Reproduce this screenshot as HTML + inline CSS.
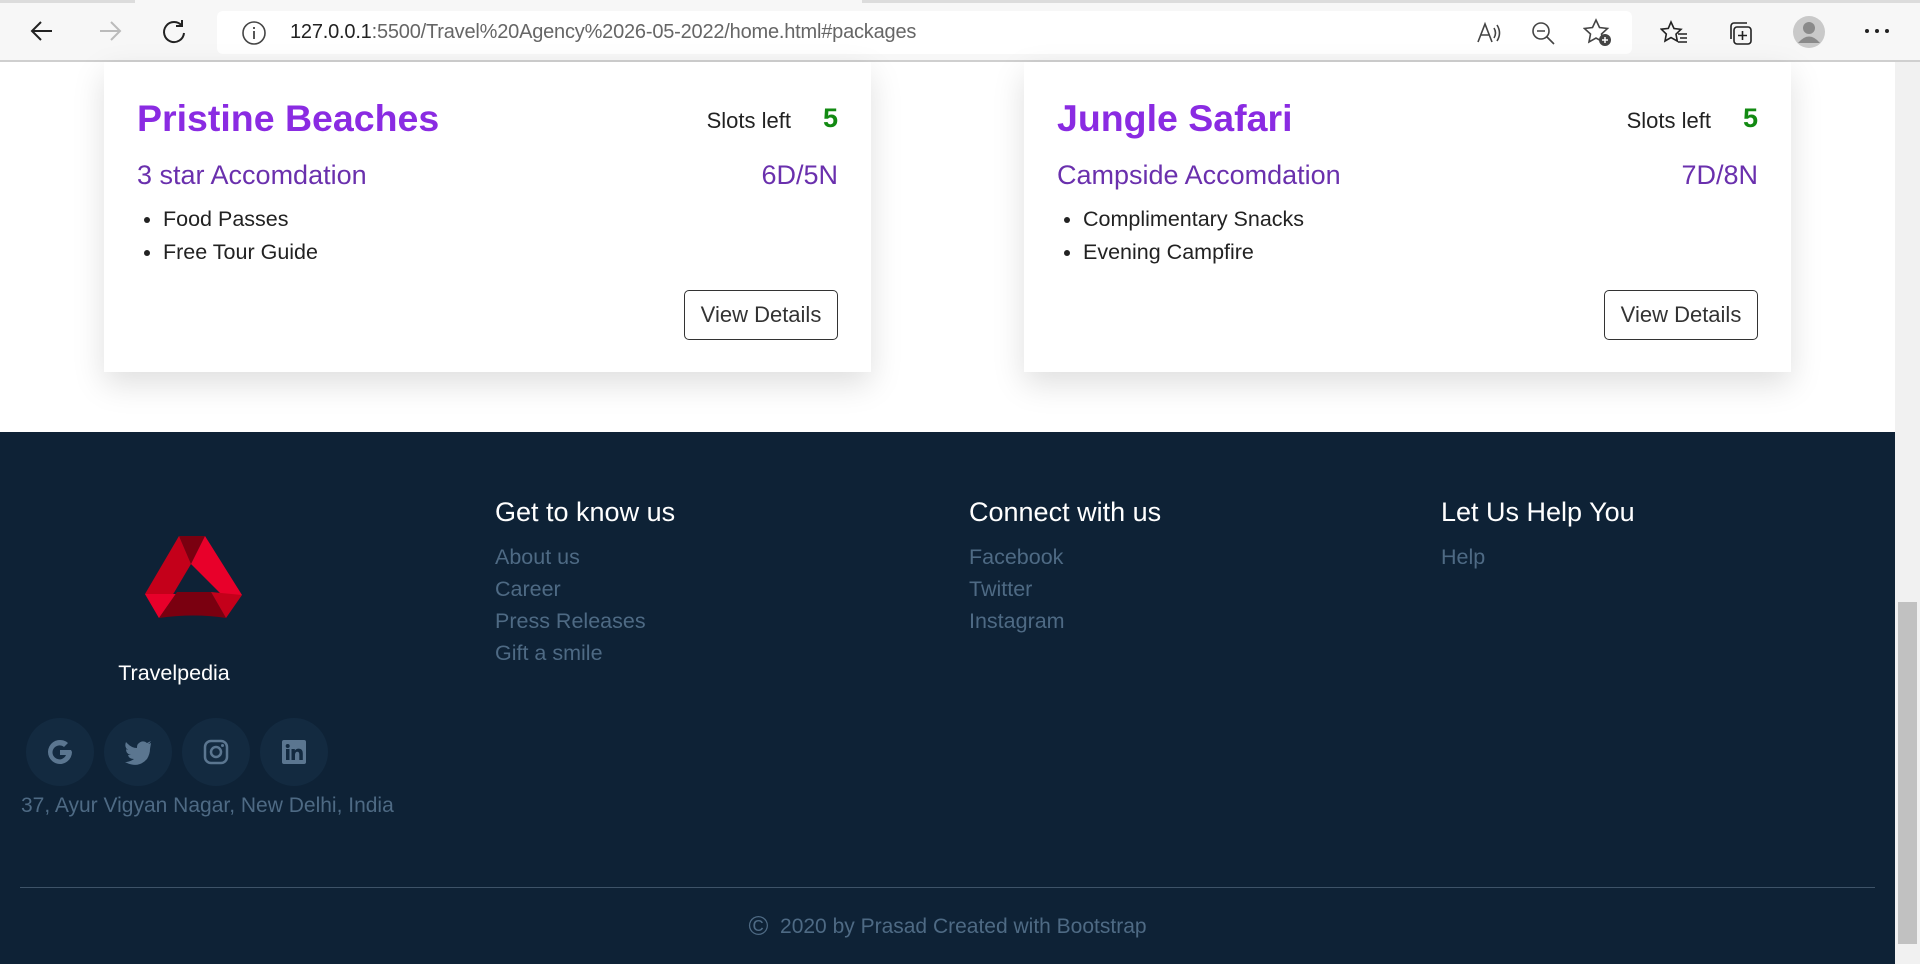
<!DOCTYPE html>
<html><head><meta charset="utf-8"><style>
*{box-sizing:border-box;margin:0;padding:0}
body{width:1920px;height:964px;overflow:hidden;background:#fff;font-family:"Liberation Sans",Arial,sans-serif;position:relative}
.bar{position:absolute;left:0;top:0;width:1920px;height:62px;background:#f7f7f7;border-bottom:2px solid #cfcfcf}
.tabedge{position:absolute;top:0;height:3px;background:#dcdcdc}
.addr{position:absolute;left:217px;top:11px;width:1415px;height:43px;background:#fff;border-radius:6px}
.url{position:absolute;left:290px;top:21px;font-size:20px;color:#666;letter-spacing:-0.2px}
.url b{font-weight:normal;color:#222}
.ic{position:absolute;top:17px}
.card{position:absolute;top:62px;width:767px;height:310px;background:#fff;box-shadow:0 12px 30px rgba(0,0,0,.13)}
.t{position:absolute;left:33px;top:35px;font-size:37.5px;font-weight:bold;color:#8a2be2}
.sl{position:absolute;right:80px;top:46px;font-size:22px;color:#222}
.n{position:absolute;right:33px;top:41px;font-size:27px;font-weight:bold;color:#128a12}
.acc{position:absolute;left:33px;top:98px;font-size:27px;color:#6a30ad}
.dur{position:absolute;right:33px;top:98px;font-size:27px;color:#6a30ad}
ul{position:absolute;left:59px;top:141px;font-size:21.5px;color:#222;line-height:33px}
.btn{position:absolute;right:33px;top:228px;width:154px;height:50px;border:1.5px solid #333;border-radius:5px;font-size:22px;color:#333;text-align:center;line-height:47px}
.foot{position:absolute;left:0;top:432px;width:1895px;height:532px;background:#0e2236}
.h{position:absolute;top:65px;font-size:27px;color:#fff}
.lk{position:absolute;font-size:21.5px;color:#4e6a84;line-height:32px}
.soc{position:absolute;top:286px;width:68px;height:68px;border-radius:50%;background:#132a40;display:flex;align-items:center;justify-content:center}
.sb{position:absolute;left:1895px;top:62px;width:25px;height:902px;background:#f1f1f1}
</style></head><body>
<div class="bar">
<div class="tabedge" style="left:0;width:135px"></div><div class="tabedge" style="left:862px;width:1058px"></div>
<svg class="ic" style="left:28px" width="28" height="28" viewBox="0 0 28 28"><path d="M24 14H5M13 5l-9 9 9 9" stroke="#222" stroke-width="2" fill="none"/></svg>
<svg class="ic" style="left:96px" width="28" height="28" viewBox="0 0 28 28"><path d="M4 14h19M15 5l9 9-9 9" stroke="#bbb" stroke-width="2" fill="none"/></svg>
<svg class="ic" style="left:160px" width="28" height="28" viewBox="0 0 28 28"><path d="M22 9A10 10 0 1 0 24 16M22 3v6h-6" stroke="#222" stroke-width="2" fill="none"/></svg>
<div class="addr"></div>
<svg class="ic" style="left:241px;top:20px" width="26" height="26" viewBox="0 0 26 26"><circle cx="13" cy="13" r="11" stroke="#444" stroke-width="1.6" fill="none"/><path d="M13 11v8M13 7v2" stroke="#444" stroke-width="1.8"/></svg>
<div class="url"><b>127.0.0.1</b>:5500/Travel%20Agency%2026-05-2022/home.html#packages</div>
<svg class="ic" style="left:1476px;top:20px" width="26" height="26" viewBox="0 0 26 26"><path d="M2 22L9 4l7 18M5 15h9M18 8q3 5 0 10M21 5q5 8 0 16" stroke="#444" stroke-width="1.6" fill="none"/></svg>
<svg class="ic" style="left:1530px;top:20px" width="26" height="26" viewBox="0 0 26 26"><circle cx="11" cy="11" r="8" stroke="#444" stroke-width="1.6" fill="none"/><path d="M17 17l7 7M7 11h8" stroke="#444" stroke-width="1.6"/></svg>
<svg class="ic" style="left:1583px;top:18px" width="30" height="30" viewBox="0 0 30 30"><path d="M13 2l3.5 7.5 8 1-6 5.5 1.6 8L13 20l-7 4 1.5-8-6-5.5 8-1z" stroke="#444" stroke-width="1.6" fill="none"/><circle cx="22" cy="22" r="6" fill="#444"/><path d="M22 19v6M19 22h6" stroke="#fff" stroke-width="1.5"/></svg>
<svg class="ic" style="left:1660px;top:20px" width="28" height="26" viewBox="0 0 28 26"><path d="M11 2l3 6.5 7 .8-5 4.8 1.3 7L11 17.5 5 21l1.3-7-5-4.8 7-.8z" stroke="#222" stroke-width="1.6" fill="none"/><path d="M18 14h9M20 18h7M18 22h9" stroke="#222" stroke-width="1.6"/></svg>
<svg class="ic" style="left:1727px;top:20px" width="28" height="28" viewBox="0 0 28 28"><rect x="7" y="7" width="17" height="17" rx="3" stroke="#222" stroke-width="1.6" fill="none"/><path d="M4 19V6a3 3 0 0 1 3-3h13M15.5 11v9M11 15.5h9" stroke="#222" stroke-width="1.6" fill="none"/></svg>
<svg class="ic" style="left:1792px;top:15px" width="34" height="34" viewBox="0 0 34 34"><circle cx="17" cy="17" r="16" fill="#c9c9c9"/><circle cx="17" cy="13" r="6" fill="#8a8a8a"/><path d="M6 28q11-13 22 0" fill="#8a8a8a"/></svg>
<svg class="ic" style="left:1864px;top:28px" width="26" height="6"><circle cx="3" cy="3" r="2" fill="#222"/><circle cx="13" cy="3" r="2" fill="#222"/><circle cx="23" cy="3" r="2" fill="#222"/></svg>
</div>

<div class="card" style="left:104px">
<div class="t">Pristine Beaches</div><div class="sl">Slots left</div><div class="n">5</div>
<div class="acc">3 star Accomdation</div><div class="dur">6D/5N</div>
<ul><li>Food Passes</li><li>Free Tour Guide</li></ul>
<div class="btn">View Details</div></div>
<div class="card" style="left:1024px">
<div class="t">Jungle Safari</div><div class="sl">Slots left</div><div class="n">5</div>
<div class="acc">Campside Accomdation</div><div class="dur">7D/8N</div>
<ul><li>Complimentary Snacks</li><li>Evening Campfire</li></ul>
<div class="btn">View Details</div></div>

<div class="foot">
<svg style="position:absolute;left:145px;top:104px" width="98" height="84" viewBox="0 0 98 84">
<path d="M34 0h26L46 28z" fill="#7a0010"/>
<path d="M34 0L0 58l14 24 32-54z" fill="#c4001a"/>
<path d="M60 0l37 59-18 2L46 28z" fill="#e8002a"/>
<path d="M0 58l31 0 -17 24z" fill="#e8002a"/>
<path d="M14 82q35-5 67 0L66 56H32z" fill="#7a0010"/>
<path d="M66 56l31 3-16 23z" fill="#c4001a"/>
</svg>
<div style="position:absolute;left:0;width:348px;text-align:center;top:229px;font-size:21.5px;color:#fff">Travelpedia</div>
<div class="soc" style="left:26px"><svg width="30" height="30" viewBox="0 0 30 30"><path d="M26 13H15v5h6a7 7 0 1 1-2-8l4-4A12 12 0 1 0 27 15z" fill="#5b7690"/></svg></div>
<div class="soc" style="left:104px"><svg width="28" height="26" viewBox="0 0 28 26"><path d="M27 4q-2 1-3 1 2-1 3-3-2 1-4 2a6 6 0 0 0-10 5Q7 9 2 3q-2 5 2 8-1 0-2-1 0 5 5 6h-3q1 4 6 4-4 3-9 3 13 7 22-3 3-5 3-10z" fill="#5b7690"/></svg></div>
<div class="soc" style="left:182px"><svg width="26" height="26" viewBox="0 0 26 26"><rect x="2" y="2" width="22" height="22" rx="6" stroke="#5b7690" stroke-width="2.5" fill="none"/><circle cx="13" cy="13" r="5" stroke="#5b7690" stroke-width="2.5" fill="none"/><circle cx="19.5" cy="6.5" r="1.5" fill="#5b7690"/></svg></div>
<div class="soc" style="left:260px"><svg width="26" height="26" viewBox="0 0 26 26"><rect x="1" y="1" width="24" height="24" rx="2" fill="#5b7690"/><path d="M5 10h3.5v11H5zM6.7 5a2 2 0 1 1 0 4 2 2 0 0 1 0-4zM10.5 10h3.3v1.6q1.3-2 4-2 4 0 4 5V21h-3.5v-5.5q0-2.8-2-2.8t-2.3 2.8V21h-3.5z" fill="#132a40"/></svg></div>
<div class="lk" style="left:21px;top:358px;font-size:21px">37, Ayur Vigyan Nagar, New Delhi, India</div>
<div class="h" style="left:495px">Get to know us</div>
<div class="lk" style="left:495px;top:109px">About us<br>Career<br>Press Releases<br>Gift a smile</div>
<div class="h" style="left:969px">Connect with us</div>
<div class="lk" style="left:969px;top:109px">Facebook<br>Twitter<br>Instagram</div>
<div class="h" style="left:1441px">Let Us Help You</div>
<div class="lk" style="left:1441px;top:109px">Help</div>
<div style="position:absolute;left:20px;top:455px;width:1855px;height:1px;background:#3e5368"></div>
<div class="lk" style="left:0;width:1895px;text-align:center;top:478px;font-size:21px"><span style="font-size:27px;vertical-align:-2px">&#169;</span>&nbsp; 2020 by Prasad Created with Bootstrap</div>
</div>
<div class="sb"><div style="position:absolute;left:3px;top:540px;width:19px;height:342px;background:#c1c1c1"></div></div>
</body></html>
